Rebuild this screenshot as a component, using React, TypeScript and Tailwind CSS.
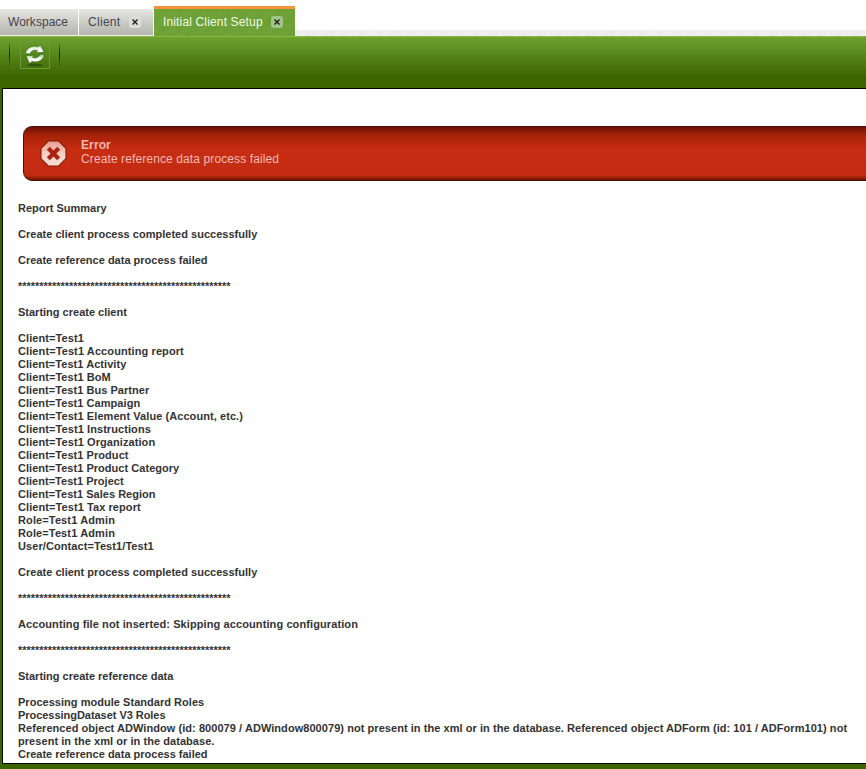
import React from "react";

function CloseBtn({ active, className }: { active?: boolean; className: string }) {
  return (
    <span className={`flex h-[12px] w-[12px] items-center justify-center rounded-[3px] ${className} ${active ? "bg-[#a3c487]" : "bg-[#dcdcd8]"}`}>
      <svg width="8" height="8" viewBox="0 0 8 8">
        <path d="M1.5 1.5L6.5 6.5M6.5 1.5L1.5 6.5" stroke="#1c1c1c" strokeWidth="1.4" fill="none" />
      </svg>
    </span>
  );
}

const stars = "**************************************************";

const lines: [string, string][] = [
  ["Report Summary", ""],
  ["", ""],
  ["Create client process completed successfully", "tracking-[0.02px]"],
  ["", ""],
  ["Create reference data process failed", ""],
  ["", ""],
  [stars, "tracking-[-0.03px]"],
  ["", ""],
  ["Starting create client", ""],
  ["", ""],
  ["Client=Test1", "tracking-[0.08px]"],
  ["Client=Test1 Accounting report", "tracking-[0.1px]"],
  ["Client=Test1 Activity", "tracking-[0.05px]"],
  ["Client=Test1 BoM", "tracking-[0.06px]"],
  ["Client=Test1 Bus Partner", "tracking-[0.04px]"],
  ["Client=Test1 Campaign", "tracking-[0.05px]"],
  ["Client=Test1 Element Value (Account, etc.)", "tracking-[0.07px]"],
  ["Client=Test1 Instructions", "tracking-[0.08px]"],
  ["Client=Test1 Organization", "tracking-[0.08px]"],
  ["Client=Test1 Product", "tracking-[0.05px]"],
  ["Client=Test1 Product Category", "tracking-[0.035px]"],
  ["Client=Test1 Project", "tracking-[0.02px]"],
  ["Client=Test1 Sales Region", "tracking-[0.02px]"],
  ["Client=Test1 Tax report", "tracking-[0.08px]"],
  ["Role=Test1 Admin", "tracking-[0.12px]"],
  ["Role=Test1 Admin", "tracking-[0.12px]"],
  ["User/Contact=Test1/Test1", "tracking-[0.08px]"],
  ["", ""],
  ["Create client process completed successfully", "tracking-[0.02px]"],
  ["", ""],
  [stars, "tracking-[-0.03px]"],
  ["", ""],
  ["Accounting file not inserted: Skipping accounting configuration", "tracking-[0.1px]"],
  ["", ""],
  [stars, "tracking-[-0.03px]"],
  ["", ""],
  ["Starting create reference data", ""],
  ["", ""],
  ["Processing module Standard Roles", "tracking-[0.03px]"],
  ["ProcessingDataset V3 Roles", "tracking-[-0.04px]"],
  [
    "Referenced object ADWindow (id: 800079 / ADWindow800079) not present in the xml or in the database. Referenced object ADForm (id: 101 / ADForm101) not present in the xml or in the database.",
    "tracking-[0.055px]",
  ],
  ["Create reference data process failed", ""],
];

function Separator() {
  return <div className="h-[27px] w-px bg-gradient-to-b from-transparent via-[#10200a] to-transparent" />;
}

export default function App() {
  return (
    <div className="flex h-[769px] w-[866px] flex-col overflow-hidden bg-white font-['Liberation_Sans',Arial,sans-serif]">
      {/* Tab strip */}
      <div className="flex h-[36px] shrink-0 items-end bg-white">
        <div className="flex h-[27px] w-[78px] items-center border-b border-[#ecece8] bg-gradient-to-b from-[#e6e6e2] to-[#b4b4ae] pl-[8px] text-[12px] tracking-[0.03px] text-[#44444e]">
          Workspace
        </div>
        <div className="ml-px flex h-[27px] w-[74px] items-center border-b border-[#ecece8] bg-gradient-to-b from-[#e6e6e2] to-[#b4b4ae] pl-[9px] text-[12px] tracking-[0.3px] text-[#44444e]">
          Client
          <CloseBtn className="ml-[9px]" />
        </div>
        <div className="ml-px flex h-[30px] w-[141px] items-center border-t-[3px] border-[#f7933a] bg-[repeating-linear-gradient(135deg,#72a63a_0px,#72a63a_1px,#6a9e34_1px,#6a9e34_2px)] pb-[2px] pl-[9px] text-[12px] tracking-[0.15px] text-[#f0f8e8]">
          Initial Client Setup
          <CloseBtn active className="ml-[8px]" />
        </div>
        <div className="h-[6px] flex-1 bg-[repeating-linear-gradient(135deg,#e8e8e8_0px,#e8e8e8_1px,#f4f4f4_1px,#f4f4f4_2px)]" />
      </div>

      {/* Green shell */}
      <div className="flex min-h-0 flex-1 flex-col bg-[#3b6500] pb-[5px] pl-[2px]">
        <div className="-ml-[2px] flex h-[52px] shrink-0 items-start border-t border-[#8ab83e] bg-[linear-gradient(to_bottom,#6ea12f_0%,#3b6500_78%)] pl-[9px] pt-[4px]">
          <Separator />
          <div className="ml-[10px] flex h-[28px] w-[30px] items-center justify-center border border-[#6b9a38]">
            <svg width="24" height="24" viewBox="0 0 24 24">
              <defs>
                <linearGradient id="ar" x1="0" y1="0" x2="0" y2="1">
                  <stop offset="0" stopColor="#8cc070" />
                  <stop offset="0.55" stopColor="#ffffff" />
                  <stop offset="1" stopColor="#ffffff" />
                </linearGradient>
              </defs>
              <ellipse cx="12" cy="22" rx="8" ry="1.5" fill="#2c4a10" opacity="0.75" />
              <path d="M2.5 10.5C3.5 4.8 9.5 1.6 15 3.6L17.4 1.4L21.2 9.4L12.6 9.8L14.6 7.6C11.2 6.4 8 7.8 6.8 11Z" fill="url(#ar)" stroke="#2f6a10" strokeWidth="0.7" />
              <path d="M21.5 11.5C20.5 17.2 14.5 20.4 9 18.4L6.6 20.6L2.8 12.6L11.4 12.2L9.4 14.4C12.8 15.6 16 14.2 17.2 11Z" fill="url(#ar)" stroke="#2f6a10" strokeWidth="0.7" />
            </svg>
          </div>
          <div className="ml-[9px]">
            <Separator />
          </div>
        </div>

        {/* White panel */}
        <div className="min-h-0 flex-1 overflow-hidden border-y border-l border-black bg-white pt-[37px]">
          <div className="ml-[20px] flex h-[55px] w-[900px] items-center rounded-l-[9px] border border-[#4a1004] bg-[linear-gradient(to_bottom,#6e1404_0px,#a52209_8px,#c62d12_22px,#c42c11_48px,#a52209_50px,#5a1202_54px)] pl-[16px]">
            <svg width="27" height="27" viewBox="0 0 26 26">
              <defs>
                <linearGradient id="oc" x1="0" y1="0" x2="0" y2="1">
                  <stop offset="0" stopColor="#e79c8c" />
                  <stop offset="0.5" stopColor="#f6cfc4" />
                  <stop offset="1" stopColor="#f8dcd2" />
                </linearGradient>
              </defs>
              <path d="M8 1H18L25 8V18L18 25H8L1 18V8Z" fill="url(#oc)" stroke="#7c1a08" strokeWidth="1" strokeLinejoin="round" />
              <path d="M8 8L18 18M18 8L8 18" stroke="#a92310" strokeWidth="4" />
            </svg>
            <div className="ml-[14px] -mt-[4px] text-[12px] leading-[14px] tracking-[0.11px] text-[#f8b8b2]">
              <div className="font-bold">Error</div>
              <div>Create reference data process failed</div>
            </div>
          </div>

          <div className="mt-[21px] w-[848px] pl-[15px] text-[11px] font-bold leading-[13px] text-[#333333]">
            {lines.map(([text, spacing], i) => (
              <div key={i} className={`min-h-[13px] ${spacing}`}>
                {text}
              </div>
            ))}
          </div>
        </div>
      </div>
    </div>
  );
}
